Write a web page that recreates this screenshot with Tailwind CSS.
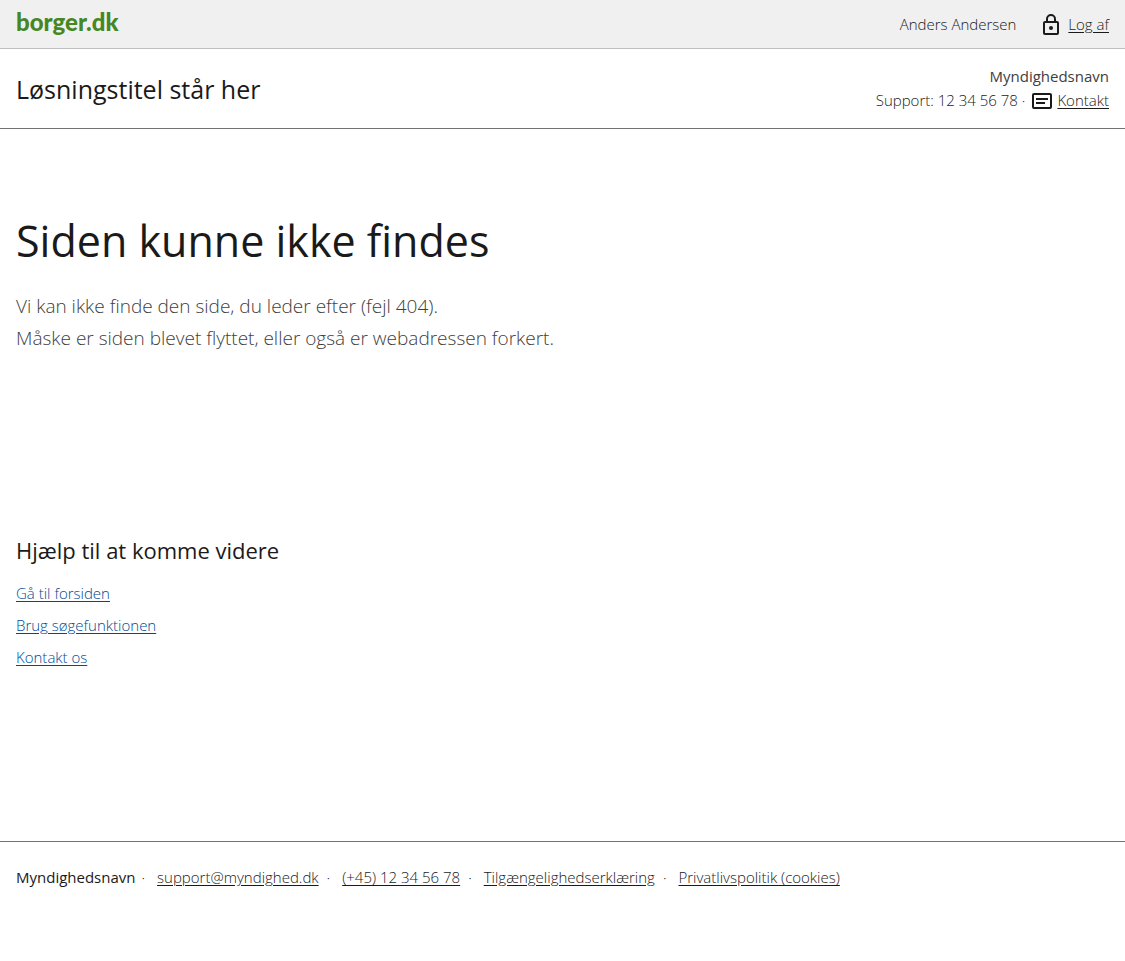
<!DOCTYPE html>
<html lang="da">
<head>
<meta charset="utf-8">
<meta name="viewport" content="width=device-width, initial-scale=1">
<title>Siden kunne ikke findes</title>
<script src="https://cdn.jsdelivr.net/npm/@tailwindcss/browser@4"></script>
</head>
<body class="flex min-h-screen flex-col bg-white font-['Open_Sans','Noto_Sans',sans-serif] text-[15px] leading-6 font-light text-[#1a1a1a]">
<header>
  <div class="flex h-[49px] items-center justify-between border-b border-[#bfbfbf] bg-[#f0f0f0] px-4">
    <a href="#" class="pb-1 font-['Lato',sans-serif] text-[24px] leading-6 font-black text-[#468722]">borger.dk</a>
    <div class="flex items-center gap-6">
      <span>Anders Andersen</span>
      <a href="#" class="flex items-center gap-1">
        <svg class="size-6" viewBox="0 0 24 24" fill="none" stroke="currentColor" stroke-width="2" aria-hidden="true"><rect x="4" y="10" width="14" height="12" rx="1"/><path d="M7 10V7a4 4 0 0 1 8 0v3"/><circle cx="11" cy="16" r="2" fill="currentColor" stroke="none"/></svg>
        <span class="underline underline-offset-2">Log af</span>
      </a>
    </div>
  </div>
  <div class="flex h-20 items-center justify-between border-b border-[#737373] px-4">
    <p class="text-[25px] leading-9 font-normal">Løsningstitel står her</p>
    <div class="pb-0.5 text-right">
      <p class="font-normal text-[#404040]">Myndighedsnavn</p>
      <div class="flex items-center justify-end gap-1">
        <span>Support: 12 34 56 78 ·</span>
        <a href="#" class="flex items-center gap-1">
          <svg class="size-6" viewBox="0 0 24 24" fill="none" stroke="currentColor" stroke-width="2" aria-hidden="true"><rect x="4" y="6" width="18" height="14" rx="1"/><path d="M7 11h12M7 15h9"/></svg>
          <span class="underline underline-offset-2">Kontakt</span>
        </a>
      </div>
    </div>
  </div>
</header>
<main class="grow px-4 pt-20">
  <h1 class="text-[43px] leading-16 font-normal">Siden kunne ikke findes</h1>
  <p class="mt-[17px] text-[19px] leading-8 text-[#404040]">Vi kan ikke finde den side, du leder efter (fejl 404).<br>Måske er siden blevet flyttet, eller også er webadressen forkert.</p>
  <h2 class="mt-45 text-[22px] leading-8 font-normal">Hjælp til at komme videre</h2>
  <ul class="mt-[11px] leading-8 text-[#004993]">
    <li><a href="#" class="underline underline-offset-2">Gå til forsiden</a></li>
    <li><a href="#" class="underline underline-offset-2">Brug søgefunktionen</a></li>
    <li><a href="#" class="underline underline-offset-2">Kontakt os</a></li>
  </ul>
</main>
<footer class="h-30 border-t border-[#737373] px-4 pt-[23px]">
  <ul class="flex flex-wrap">
    <li><span class="font-normal">Myndighedsnavn</span><span class="mr-3 ml-1.5">·</span></li>
    <li><a href="#" class="underline underline-offset-2">support@myndighed.dk</a><span class="mr-3 ml-2">·</span></li>
    <li><a href="#" class="underline underline-offset-2">(+45) 12 34 56 78</a><span class="mr-3 ml-2">·</span></li>
    <li><a href="#" class="underline underline-offset-2">Tilgængelighedserklæring</a><span class="mr-3 ml-2">·</span></li>
    <li><a href="#" class="underline underline-offset-2">Privatlivspolitik (cookies)</a></li>
  </ul>
</footer>
</body>
</html>
